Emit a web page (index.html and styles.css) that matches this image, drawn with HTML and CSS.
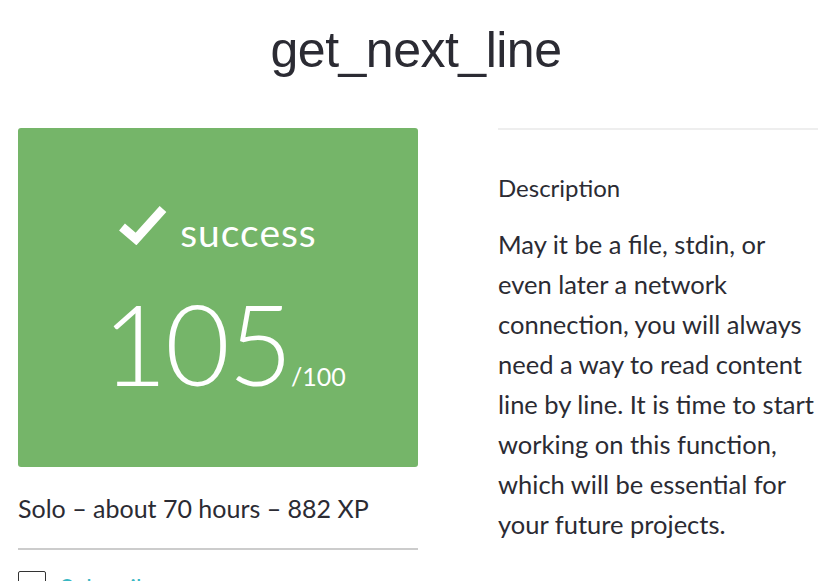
FILE: index.html
```html
<!DOCTYPE html>
<html>
<head>
<meta charset="utf-8">
<link rel="stylesheet" href="styles.css">
</head>
<body>
<h1 class="title">get_next_line</h1>
<div class="main">
  <div class="left">
    <div class="score-card">
      <div class="status">
        <svg class="check" width="48" height="42" viewBox="0 0 48 42"><path d="M3 24 L17 36 L44 6" fill="none" stroke="#fff" stroke-width="9" stroke-linejoin="miter" stroke-linecap="butt"/></svg>
        <span class="status-text">success</span>
      </div>
      <div class="score"><span class="big">105</span><span class="max">/100</span></div>
    </div>
    <p class="meta">Solo – about 70 hours – 882 XP</p>
    <hr class="sep">
    <div class="check-row"><span class="box"></span><span class="link">Subscribe</span></div>
  </div>
  <div class="right">
    <h2 class="desc-title">Description</h2>
    <p class="desc">May it be a file, stdin, or<br>even later a network<br>connection, you will always<br>need a way to read content<br>line by line. It is time to start<br>working on this function,<br>which will be essential for<br>your future projects.</p>
  </div>
</div>
</body>
</html>
```
FILE: styles.css
```css
html, body { margin: 0; padding: 0; background: #fff; overflow: hidden; }
body { font-family: "Lato", "Noto Sans", sans-serif; color: #2b2b33; }
.title {
  margin: 0; height: 100px; line-height: 100px; text-align: center;
  font-family: "Liberation Sans", Arial, sans-serif; font-weight: 400; font-size: 50px; color: #2b2b33;
  letter-spacing: -0.5px;
}
.main { display: flex; gap: 80px; padding: 28px 14px 0 18px; }
.left { width: 400px; flex: none; }
.right { width: 320px; flex: none; border-top: 2px solid #eee; }
.score-card {
  background: #75b569; border-radius: 3px; height: 339px; color: #fff;
  display: flex; flex-direction: column; align-items: center; box-sizing: border-box; padding-top: 75px;
}
.status { display: flex; align-items: center; gap: 13px; height: 50px; }
.check { display: block; margin-top: -8px; }
.status-text { font-size: 39px; letter-spacing: 1px; font-weight: 400; line-height: 50px; margin-top: 8px; }
.score { display: flex; align-items: baseline; margin-top: 30px; padding-left: 12px; }
.big { font-size: 112px; font-weight: 300; line-height: 120px; letter-spacing: -2px; }
.max { font-size: 25px; margin-left: 0; }
.meta { margin: 0; font-size: 25px; line-height: 30px; padding-top: 26px; }
.sep { border: none; border-top: 2px solid #ccc; margin: 25px 0 0; }
.check-row { display: flex; align-items: flex-start; gap: 14px; margin-top: 21px; }
.box { width: 26px; height: 26px; border: 1px solid #333; border-radius: 2px; display: block; flex: none; }
.link { color: #39b7c3; font-size: 24px; line-height: 24px; margin-top: 4px; }
.desc-title { margin: 0; font-weight: 400; font-size: 24px; line-height: 30px; padding-top: 43px; }
.desc { margin: 21px 0 0; font-size: 25.5px; line-height: 40px; white-space: nowrap; }
```
